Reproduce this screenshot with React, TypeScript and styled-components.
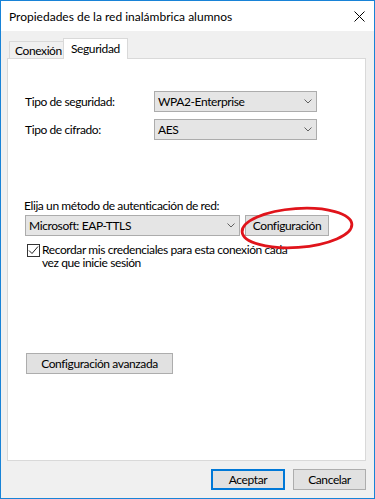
import React from "react";
import styled, { createGlobalStyle } from "styled-components";

const GlobalStyle = createGlobalStyle`
  html, body { margin: 0; padding: 0; background: #ffffff; }
  body { font-family: "Lato", "Liberation Sans", sans-serif; font-size: 12px; color: #000; letter-spacing: -0.4px; }
  * { box-sizing: border-box; }
`;

const Window = styled.div`
  width: 375px;
  height: 499px;
  border: 1px solid #1883d7;
  background: #f0f0f0;
  display: flex;
  flex-direction: column;
`;

const TitleBar = styled.div`
  height: 30px;
  flex: none;
  background: #ffffff;
  display: flex;
  align-items: center;
  justify-content: space-between;
  padding: 0 9px 0 8px;
`;

const Title = styled.span`
  font-size: 12px;
  letter-spacing: 0;
  color: #000;
`;

const Body = styled.div`
  flex: 1;
  display: flex;
  flex-direction: column;
  padding: 7px 8px 7px 6px;
`;

const TabStrip = styled.div`
  display: flex;
  align-items: flex-end;
  padding-left: 2px;
  height: 20px;
  position: relative;
  z-index: 2;
`;

const Tab = styled.div<{ $active?: boolean }>`
  height: ${(p) => (p.$active ? "21px" : "17px")};
  margin-bottom: ${(p) => (p.$active ? "-1px" : "0")};
  width: ${(p) => (p.$active ? "65px" : "55px")};
  margin-left: ${(p) => (p.$active ? "-1px" : "0")};
  background: ${(p) => (p.$active ? "#ffffff" : "#f0f0f0")};
  border: 1px solid #d9d9d9;
  border-bottom: none;
  border-right: ${(p) => (p.$active ? "1px solid #d9d9d9" : "none")};
  padding: ${(p) => (p.$active ? "2px 0 0 7px" : "1px 0 0 5px")};
  font-size: 12px;
  line-height: 15px;
  color: #000;
  white-space: nowrap;
`;

const Panel = styled.div`
  position: relative;
  height: 403px;
  background: #ffffff;
  border: 1px solid #d9d9d9;
  padding: 32px 0 0 17px;
  display: flex;
  flex-direction: column;
`;

const FieldRow = styled.div`
  display: flex;
  align-items: center;
  height: 21px;
  & + & { margin-top: 7px; }
`;

const Label = styled.span`
  width: 129px;
  flex: none;
  font-size: 12px;
`;

const Select = styled.div<{ $w: number }>`
  width: ${(p) => p.$w}px;
  height: 21px;
  background: #e5e5e5;
  border: 1px solid #acacac;
  display: flex;
  align-items: center;
  justify-content: space-between;
  padding: 0 4px 0 3px;
  font-size: 12px;
`;

const Chevron = () => (
  <svg width="8" height="5" viewBox="0 0 8 5">
    <polyline points="0.5,0.5 4,4 7.5,0.5" fill="none" stroke="#606060" strokeWidth="1" />
  </svg>
);

const Section = styled.div`
  margin-top: 58px;
  display: flex;
  flex-direction: column;
`;

const Caption = styled.div`
  font-size: 12px;
  line-height: 15px;
  margin-left: -1px;
`;

const ComboRow = styled.div`
  margin-top: 2px;
  display: flex;
  gap: 5px;
`;

const Button = styled.div<{ $w: number; $default?: boolean }>`
  width: ${(p) => p.$w}px;
  height: 21px;
  flex: none;
  background: #e1e1e1;
  border: ${(p) => (p.$default ? "2px solid #0078d7" : "1px solid #adadad")};
  display: flex;
  align-items: center;
  justify-content: center;
  font-size: 12px;
  color: #000;
`;

const CheckRow = styled.div`
  margin-top: 8px;
  margin-left: 2px;
  display: flex;
  gap: 2px;
  align-items: flex-start;
`;

const Box = styled.div`
  width: 13px;
  height: 13px;
  flex: none;
  border: 1px solid #333333;
  background: #ffffff;
  display: flex;
  align-items: center;
  justify-content: center;
`;

const CheckText = styled.div`
  font-size: 12px;
  line-height: 13px;
  margin-top: -1px;
`;

const AdvancedWrap = styled.div`
  margin-top: 84px;
  margin-left: 1px;
`;

const Footer = styled.div`
  margin-top: 8px;
  display: flex;
  justify-content: flex-end;
  gap: 8px;
`;

const Ellipse = styled.svg`
  position: absolute;
  left: 227px;
  top: 141px;
  pointer-events: none;
`;

export default function App() {
  return (
    <>
      <GlobalStyle />
      <Window>
        <TitleBar>
          <Title>Propiedades de la red inalámbrica alumnos</Title>
          <svg width="11" height="11" viewBox="0 0 11 11">
            <path d="M0.5 0.5 L10.5 10.5 M10.5 0.5 L0.5 10.5" stroke="#000" strokeWidth="1" />
          </svg>
        </TitleBar>
        <Body>
          <TabStrip>
            <Tab>Conexión</Tab>
            <Tab $active>Seguridad</Tab>
          </TabStrip>
          <Panel>
            <FieldRow>
              <Label>Tipo de seguridad:</Label>
              <Select $w={163}>
                <span>WPA2-Enterprise</span>
                <Chevron />
              </Select>
            </FieldRow>
            <FieldRow>
              <Label>Tipo de cifrado:</Label>
              <Select $w={163}>
                <span>AES</span>
                <Chevron />
              </Select>
            </FieldRow>
            <Section>
              <Caption>Elija un método de autenticación de red:</Caption>
              <ComboRow>
                <Select $w={215}>
                  <span>Microsoft: EAP-TTLS</span>
                  <Chevron />
                </Select>
                <Button $w={84}>Configuración</Button>
              </ComboRow>
              <CheckRow>
                <Box>
                  <svg width="11" height="11" viewBox="0 0 11 11">
                    <polyline points="1,5.5 4,8.5 10,1.5" fill="none" stroke="#222" strokeWidth="1" />
                  </svg>
                </Box>
                <CheckText>
                  Recordar mis credenciales para esta conexión cada
                  <br />
                  vez que inicie sesión
                </CheckText>
              </CheckRow>
              <AdvancedWrap>
                <Button $w={147}>Configuración avanzada</Button>
              </AdvancedWrap>
            </Section>
            <Ellipse width="124" height="56" viewBox="0 0 124 56">
              <ellipse cx="62" cy="28" rx="55" ry="19.5" fill="none" stroke="#e0141b" strokeWidth="2.8" transform="rotate(-4 62 28)" />
            </Ellipse>
          </Panel>
          <Footer>
            <Button $w={74} $default>Aceptar</Button>
            <Button $w={73}>Cancelar</Button>
          </Footer>
        </Body>
      </Window>
    </>
  );
}
